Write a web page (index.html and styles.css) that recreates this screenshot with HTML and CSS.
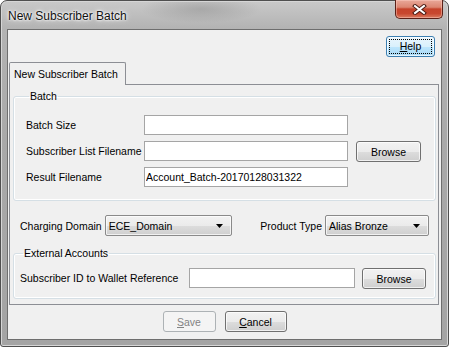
FILE: index.html
```html
<!doctype html>
<html lang="en">
  <head>
    <meta charset="UTF-8" />
    <title>New Subscriber Batch</title>
    <link rel="stylesheet" href="styles.css">
  </head>
  <body>
    <div class="window">
      <div class="titlebar">
        <span class="title">New Subscriber Batch</span>
        <button class="close" type="button" aria-label="Close">
          <svg width="15" height="11" viewBox="0 0 15 11">
            <path d="M3 2 L12 9 M12 2 L3 9" stroke="#4a1a12" stroke-width="4" stroke-linecap="square" />
            <path d="M3 2 L12 9 M12 2 L3 9" stroke="#fff" stroke-width="2" stroke-linecap="square" />
          </svg>
        </button>
      </div>

      <div class="client">
        <div class="help-row">
          <button class="btn btn-default" type="button"><span class="focus"><u>H</u>elp</span></button>
        </div>

        <div class="tabs">
          <div class="tab-strip">
            <div class="tab active">New Subscriber Batch</div>
          </div>

          <div class="tab-panel">
            <fieldset class="group batch">
              <legend>Batch</legend>
              <div class="form-grid">
                <label>Batch Size</label>
                <input class="field" type="text" value="" />
                <span></span>

                <label>Subscriber List Filename</label>
                <input class="field" type="text" value="" />
                <button class="btn browse" type="button">Browse</button>

                <label>Result Filename</label>
                <input class="field" type="text" value="Account_Batch-20170128031322" />
                <span></span>
              </div>
            </fieldset>

            <div class="domain-row">
              <label>Charging Domain</label>
              <div class="combo domain">
                <span>ECE_Domain</span>
                <svg width="7" height="4" viewBox="0 0 7 4"><path d="M0 0 H7 L3.5 4 Z" fill="#000" /></svg>
              </div>
              <label class="product-label">Product Type</label>
              <div class="combo product">
                <span>Alias Bronze</span>
                <svg width="7" height="4" viewBox="0 0 7 4"><path d="M0 0 H7 L3.5 4 Z" fill="#000" /></svg>
              </div>
            </div>

            <fieldset class="group external">
              <legend>External Accounts</legend>
              <div class="wallet-row">
                <label>Subscriber ID to Wallet Reference</label>
                <input class="field wallet" type="text" value="" />
                <button class="btn browse wide" type="button">Browse</button>
              </div>
            </fieldset>
          </div>
        </div>

        <div class="actions">
          <button class="btn save" type="button" disabled><u>S</u>ave</button>
          <button class="btn cancel" type="button"><u>C</u>ancel</button>
        </div>
      </div>
    </div>
  </body>
</html>
```

FILE: styles.css
```css
* {
  margin: 0;
  padding: 0;
  box-sizing: border-box;
}

body {
  font-family: "Liberation Sans", Arial, sans-serif;
  font-size: 10.5px;
  color: #000;
  background: #fff;
}

label {
  white-space: nowrap;
}

/* window frame */
.window {
  width: 449px;
  height: 347px;
  border: 1px solid #4f4f4f;
  border-radius: 7px 7px 3px 3px;
  background:
    radial-gradient(ellipse 60px 14px at 200px 8px, rgba(120, 120, 120, 0.35), transparent),
    linear-gradient(180deg, #c9c9c9 0%, #b3b3b3 8%, #a9a9a9 40%, #a4a4a4 100%);
  box-shadow: inset 0 0 0 1px #d6d6d6;
  padding: 0 6px 6px;
  display: flex;
  flex-direction: column;
}

.titlebar {
  height: 28px;
  display: flex;
  align-items: flex-start;
  justify-content: space-between;
}

.title {
  font-size: 12px;
  margin: 8px 0 0 1px;
  color: #111;
  text-shadow: 0 0 6px #fff, 0 0 3px #fff, 0 0 2px #fff;
}

.close {
  width: 48px;
  height: 19px;
  margin: -1px -1px 0 0;
  border: 1px solid #5b2017;
  border-top: none;
  border-radius: 0 0 5px 5px;
  background: linear-gradient(180deg, #e9a899 0%, #dc8672 40%, #c5432b 50%, #c8472f 75%, #d97a5f 100%);
  box-shadow: inset 0 0 0 1px rgba(255, 210, 200, 0.45);
  display: flex;
  align-items: center;
  justify-content: center;
}

.client {
  flex: 1;
  background: #f0f0f0;
  border: 1px solid #6e6e6e;
  display: flex;
  flex-direction: column;
}

/* buttons */
.btn {
  font-family: inherit;
  font-size: 10.5px;
  color: #000;
  height: 21px;
  border: 1px solid #707070;
  border-radius: 3px;
  background: linear-gradient(180deg, #f2f2f2 0%, #ebebeb 50%, #dddddd 51%, #cfcfcf 100%);
  box-shadow: inset 0 0 0 1px rgba(255, 255, 255, 0.7);
}

.btn u {
  text-decoration-thickness: 1px;
  text-underline-offset: 1px;
}

.help-row {
  display: flex;
  justify-content: flex-end;
  padding: 6px 6px 0 0;
}

.btn-default {
  width: 49px;
  border-color: #3c7fb1;
  background: linear-gradient(180deg, #eaf6fd 0%, #d9f0fc 50%, #bee6fd 51%, #a7d9f5 100%);
  padding: 2px;
}

.btn-default .focus {
  display: block;
  height: 100%;
  border: 1px dotted #000;
  line-height: 13px;
}

/* tabs */
.tabs {
  margin: 5px 2px 0 1px;
}

.tab-strip {
  display: flex;
}

.tab {
  position: relative;
  height: 23px;
  margin-bottom: -1px;
  padding: 5px 7px 0 4px;
  border: 1px solid #8c8e94;
  border-bottom: none;
  border-radius: 2px 2px 0 0;
  background: #f0f0f0;
}

.tab-panel {
  border: 1px solid #8c8e94;
  padding: 0 2px 5px 3px;
}

/* group boxes */
.group {
  border: 1px solid #d5dfe5;
  border-radius: 3px;
  box-shadow: inset 0 0 0 1px #fff;
  min-width: 0;
}

.group legend {
  line-height: 12px;
  margin-left: 3px;
  padding: 0 1px;
}

.batch {
  margin-top: 5px;
  padding: 13px 0 13px 12px;
}

.form-grid {
  display: grid;
  grid-template-columns: 110px 204px 65px;
  grid-auto-rows: 20px;
  column-gap: 8px;
  row-gap: 6px;
  align-items: center;
}

.form-grid label {
  line-height: 20px;
}

.field {
  height: 20px;
  border: 1px solid #a5a5a5;
  background: #fff;
  font-family: inherit;
  font-size: 10.5px;
  padding: 0 1px;
  outline: none;
}

.browse {
  width: 65px;
  align-self: start;
}

.wide {
  width: 64px;
}

/* combos */
.domain-row {
  display: flex;
  align-items: center;
  margin-top: 14px;
  padding: 0 7px 0 7px;
  height: 21px;
}

.combo {
  height: 21px;
  display: flex;
  align-items: center;
  justify-content: space-between;
  padding: 0 8px 0 3px;
  border: 1px solid #8a8a8a;
  border-radius: 2px;
  background: linear-gradient(180deg, #f2f2f2 0%, #ebebeb 50%, #dddddd 51%, #cfcfcf 100%);
  box-shadow: inset 0 0 0 1px rgba(255, 255, 255, 0.7);
}

.domain {
  width: 127px;
  margin-left: 3px;
}

.product-label {
  margin-left: auto;
}

.product {
  width: 104px;
  margin-left: 3px;
}

.external {
  margin-top: 11px;
  padding: 9px 0 9px 6px;
}

.wallet-row {
  display: flex;
  align-items: flex-start;
}

.wallet-row label {
  width: 169px;
  line-height: 20px;
}

.wallet {
  width: 166px;
  margin-right: 7px;
}

/* bottom buttons */
.actions {
  display: flex;
  justify-content: center;
  gap: 9px;
  margin-top: 6px;
}

.save {
  width: 53px;
  color: #838383;
  border-color: #adb2b5;
  background: #f4f4f4;
  box-shadow: none;
}

.cancel {
  width: 62px;
}
```
